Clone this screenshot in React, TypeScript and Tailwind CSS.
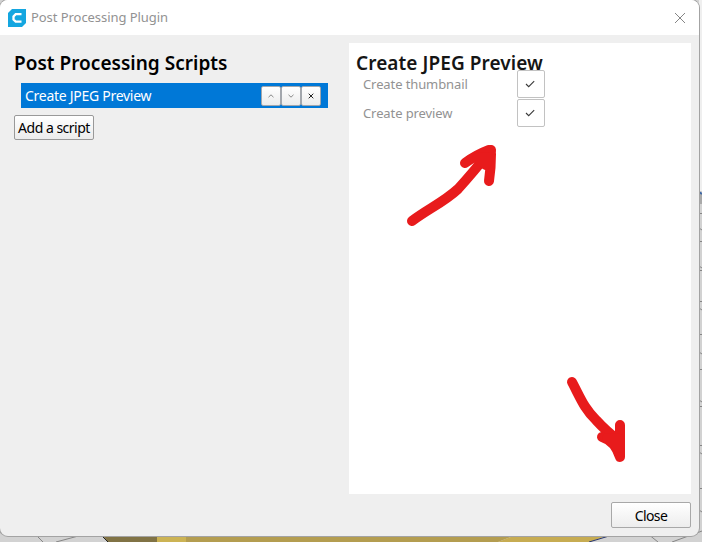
import React from "react";

function Backdrop() {
  return (
    <svg className="absolute inset-0" width="702" height="542" viewBox="0 0 702 542" aria-hidden="true">
      <rect width="702" height="542" fill="#d2d2d2" />
      <rect x="699" width="3" height="191" fill="#efefef" />
      <rect x="699" y="193" width="3" height="11" fill="#a9a9a9" />
      <path d="M699 192l3 2" stroke="#3d67a4" strokeWidth="2" />
      <path
        d="M699 213.500h3M699 228l3 2M699 241.500h3M699 266l3 2M699 270.500h3M699 301.500h3M699 308l3 2M699 334.500h3M699 352l3 2M699 369.500h3M699 400l3 2M699 406.500h3M699 445.500h3M699 452l3 2M699 488.500h3M699 510l3 2M36 535l7 7M56 542l26-7M648 534l10 8M672 542l30-11"
        stroke="#858585"
        fill="none"
      />
      <path d="M102 535h55v7h-49z" fill="#817345" />
      <path d="M157 535h29v7h-29z" fill="#ccb354" />
      <path d="M186 535h330l-18 7H186z" fill="#b49d50" />
      <path d="M516 535h93l-20 7h-91z" fill="#c7ac52" />
      <path d="M102 536l6 6" stroke="#222" />
      <path d="M589 542l20-6" stroke="#26346b" />
    </svg>
  );
}

function Logo() {
  return (
    <svg className="ml-2 h-[18px] w-[18px] shrink-0" viewBox="0 0 18 18" aria-hidden="true">
      <path d="M4 0h14v14l-4 4H0V4z" fill="#14a6e0" />
      <path d="M13.500 5.200H7.700L5.500 7.400v3.200l2.200 2.100h5.800" fill="none" stroke="#fff" strokeWidth="2.300" />
    </svg>
  );
}

function MiniButton({ d, stroke }: { d: string; stroke: string }) {
  return (
    <button className="flex h-5 w-5 items-center justify-center rounded-[2px] border border-[#a3a7ad] bg-linear-to-b from-white to-[#ececec]">
      <svg className="h-2 w-2" viewBox="0 0 8 8">
        <path d={d} fill="none" stroke={stroke} strokeWidth="1" />
      </svg>
    </button>
  );
}

function Setting({ label }: { label: string }) {
  return (
    <div className="flex h-[29px] items-start justify-between">
      <span className="text-[13px] leading-7 tracking-[-0.1px] text-[#929292]">{label}</span>
      <span className="flex h-7 w-7 items-center justify-center rounded-[2px] border border-[#c2c2c2] bg-white">
        <svg className="mr-[2px] h-[10px] w-[10px]" viewBox="0 0 10 10">
          <path d="M1 5l2.700 2.700L9.200 2.200" fill="none" stroke="#3a3a3a" strokeWidth="1.100" />
        </svg>
      </span>
    </div>
  );
}

export default function App() {
  return (
    <div className="relative h-[542px] w-[702px] overflow-hidden font-['Noto_Sans',sans-serif]">
      <Backdrop />
      <div className="relative flex h-[536px] w-[699px] flex-col overflow-hidden rounded-lg bg-[#efefef] shadow-[0_0_0_1px_#a3a3a3]">
        <header className="flex h-[35px] shrink-0 items-center bg-white">
          <Logo />
          <span className="ml-[5px] grow text-[13px] tracking-[-0.06px] text-[#929292]">Post Processing Plugin</span>
          <svg className="mr-[13px] h-3 w-3" viewBox="0 0 12 12">
            <path d="M1 1l10 10M11 1L1 11" stroke="#858585" />
          </svg>
        </header>
        <main className="flex h-[459px] shrink-0 pt-2">
          <section className="w-[349px] pl-[14px]">
            <h1 className="pt-[6px] text-[19px] leading-7 font-semibold tracking-[0.02px] text-black">Post Processing Scripts</h1>
            <div className="mt-[6px] ml-[7px] flex h-[25px] w-[307px] items-center bg-[#0078d7] pr-[7px] pl-1">
              <span className="grow text-[14px] tracking-[-0.28px] text-white">Create JPEG Preview</span>
              <MiniButton d="M1.500 5.200L4 2.800l2.500 2.400" stroke="#888" />
              <MiniButton d="M1.500 2.800L4 5.200l2.500-2.400" stroke="#888" />
              <MiniButton d="M1.700 1.700l4.600 4.600M6.300 1.700L1.700 6.300" stroke="#222" />
            </div>
            <button className="mt-[7px] flex h-[25px] w-20 items-center justify-center rounded-[2px] border border-[#999] bg-linear-to-b from-white to-[#ececec] text-[14px] tracking-[-0.5px] whitespace-nowrap text-black">
              Add a script
            </button>
          </section>
          <section className="w-[342px] bg-white">
            <h2 className="pt-[6px] pl-[7px] text-[19px] leading-7 font-semibold tracking-[0.08px] whitespace-nowrap text-[#151515]">
              Create JPEG Preview
            </h2>
            <div className="-mt-[7px] w-[196px] pl-[14px]">
              <Setting label="Create thumbnail" />
              <Setting label="Create preview" />
            </div>
          </section>
        </main>
        <footer className="flex justify-end pt-2 pr-2">
          <button className="flex h-[26px] w-20 items-center justify-center rounded-[2px] border border-[#a8a8a8] bg-linear-to-b from-white to-[#ededed] text-[14px] tracking-[-0.6px] text-black">
            Close
          </button>
        </footer>
      </div>
      <svg className="pointer-events-none absolute inset-0" width="702" height="542" viewBox="0 0 702 542" aria-hidden="true">
        <g fill="none" stroke="#e81b1c" strokeWidth="10" strokeLinecap="round" strokeLinejoin="round">
          <path d="M412 221C428 209 444 202 458 189C468 178 479 165 491 150" />
          <path d="M465 163Q476 155 489 150Q491 150 491 154Q491 168 489 181" />
          <path d="M477 158L486 165L488 157z" fill="#e81b1c" />
          <path d="M572 382C581 399 584 408 596 420Q607 432 618 440" />
          <path d="M620 425V457Q615 441 602 437" />
          <path d="M607 438L619 448V439z" fill="#e81b1c" />
        </g>
      </svg>
    </div>
  );
}
